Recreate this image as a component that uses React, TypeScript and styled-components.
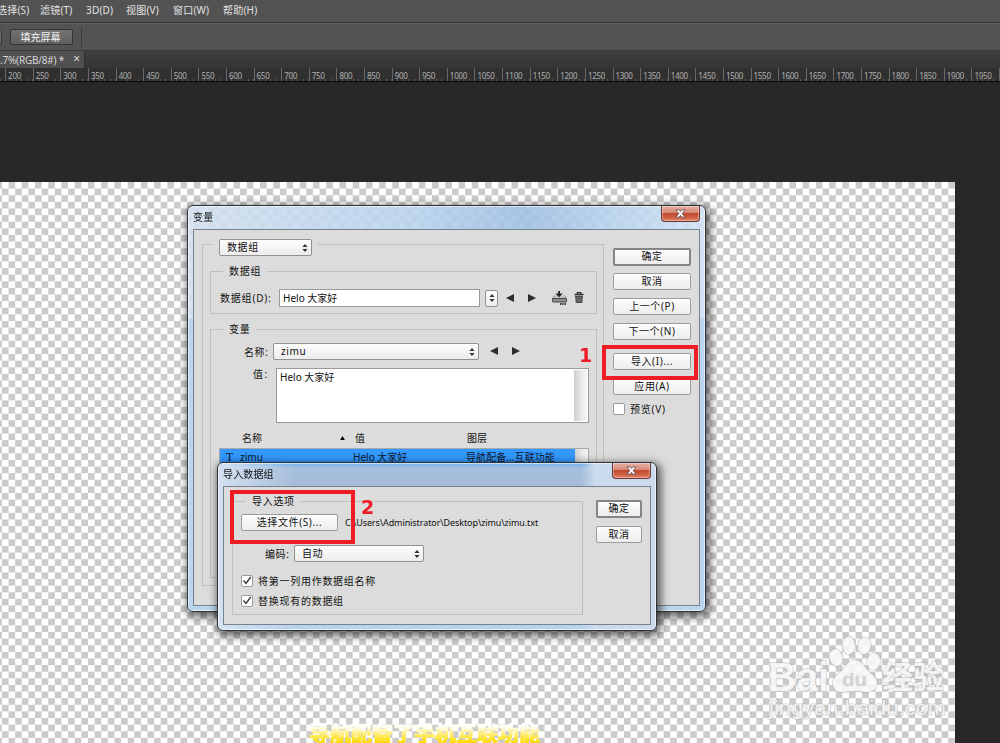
import * as React from 'react';
import { useState } from 'react';
import styled, { createGlobalStyle, css } from 'styled-components';

const GlobalStyle = createGlobalStyle`
  *, *::before, *::after {
    box-sizing: border-box;
  }
  html, body {
    margin: 0;
    padding: 0;
    overflow: hidden;
    background: #282828;
  }
  body {
    font-family: 'Noto Sans', 'Noto Sans CJK SC', sans-serif;
    font-size: 10px;
    line-height: 14px;
    color: #111;
  }
  button, input, textarea {
    font: inherit;
    color: inherit;
  }
`;

const Page = styled.div`
  position: relative;
  display: flex;
  flex-direction: column;
  width: 1000px;
  height: 743px;
  overflow: hidden;
`;

/* ---------- application chrome ---------- */

const MenuBar = styled.nav`
  display: flex;
  height: 23px;
  padding-top: 4px;
  background: #535353;
  border-bottom: 1px solid #383838;
  color: #e2e2e2;
`;

const MenuItem = styled.span<{ $width: number; $spacing?: number }>`
  flex: none;
  width: ${(p) => p.$width}px;
  line-height: 13px;
  white-space: nowrap;
  letter-spacing: ${(p) => p.$spacing ?? 0.2}px;
`;

const OptionsBar = styled.div`
  display: flex;
  align-items: center;
  height: 28px;
  background: #535353;
  border-top: 1px solid #626262;
  border-bottom: 1px solid #383838;
`;

const OptionButton = styled.button<{ $cut?: boolean }>`
  width: ${(p) => (p.$cut ? 12 : 63)}px;
  height: 16px;
  margin: 0 8px 0 ${(p) => (p.$cut ? -10 : 0)}px;
  padding: 0 2px 0 0;
  line-height: 12px;
  color: #f4f4f4;
  background: linear-gradient(#727272, #5f5f5f);
  border: 1px solid #343434;
  border-radius: 2px;
`;

const OptionDivider = styled.i`
  width: 1px;
  height: 20px;
  background: #3c3c3c;
`;

const TabBar = styled.div`
  display: flex;
  height: 17px;
  background: linear-gradient(#3f3f3f, #353535);
`;

const Tab = styled.div`
  display: flex;
  width: 85px;
  padding-top: 2px;
  line-height: 14px;
  letter-spacing: -0.2px;
  color: #d6d6d6;
  background: #505050;
  border-right: 1px solid #2d2d2d;
`;

const TabClose = styled.span`
  margin-left: 9px;
  font-size: 12px;
  line-height: 12px;
`;

const Ruler = styled.div`
  display: flex;
  height: 14px;
  overflow: hidden;
  background: #303030;
  border-bottom: 1px solid #090909;
`;

const RulerStep = styled.div`
  flex: none;
  width: 27.62px;
  height: 13px;
  padding-left: 2px;
  font-size: 8px;
  line-height: 15px;
  letter-spacing: -0.3px;
  color: #b0b0b0;
  border-left: 1px solid #686868;
  background: repeating-linear-gradient(90deg, transparent 0 4.5px, #5c5c5c 4.5px 5.5px) 0 100% / 100% 2px no-repeat;

  &:first-child {
    margin-left: -22.5px;
  }
`;

const Workspace = styled.main`
  position: relative;
  flex: 1;
  padding-top: 100px;
  background: #282828;
`;

const ArtBoard = styled.div`
  width: 955px;
  height: 561px;
  overflow: hidden;
`;

/* ---------- windows ---------- */

const Window = styled.section<{ $x: number; $y: number; $w: number; $h: number; $front?: boolean }>`
  position: absolute;
  left: ${(p) => p.$x}px;
  top: ${(p) => p.$y}px;
  display: flex;
  flex-direction: column;
  width: ${(p) => p.$w}px;
  height: ${(p) => p.$h}px;
  padding: 0 5px 5px;
  border: 1px solid #2f3338;
  border-radius: 6px;
  box-shadow: inset 0 0 0 1px rgba(255, 255, 255, 0.6), 2px 3px 9px 2px rgba(0, 0, 0, 0.6);
  backdrop-filter: blur(1.5px);
  background: ${(p) =>
    p.$front
      ? 'linear-gradient(90deg, #d3e1f2 0, rgba(180,200,222,0) 18%), linear-gradient(90deg, transparent 83%, #cbdaec 86%), linear-gradient(#69aef2 0, #a5bfdd 5px, #a6bbd5 24px, #c3d8ee 60px, #b9d3ec)'
      : 'linear-gradient(90deg, #d3e1f0d8 0, #c4d9efd8 20%, #b8d3efd8 42%, #9cbfe2d8 65%, #b8d3efd8 84%, #d0e2f4d8 100%) 0 0 / 100% 112px no-repeat, linear-gradient(transparent 112px, #bbd5ef 112px)'};
`;

const TitleBar = styled.header`
  display: flex;
  flex: none;
  justify-content: space-between;
  height: 23px;
  line-height: 23px;
  letter-spacing: 0.15px;
`;

const CloseButton = styled.button`
  display: flex;
  align-items: center;
  justify-content: center;
  width: 39px;
  height: 16px;
  padding: 0;
  background: linear-gradient(#e6b3a6 0, #d68773 45%, #c04a31 50%, #cf5d40 75%, #e1876a);
  border: 1px solid #6b3433;
  border-top: 0;
  border-radius: 0 0 4px 4px;
  box-shadow: inset 0 0 0 1px rgba(255, 255, 255, 0.35);
`;

const Client = styled.div<{ $top: number }>`
  display: flex;
  flex: 1;
  align-items: flex-start;
  padding: ${(p) => p.$top}px 0 0 8px;
  background: #dcdcdc;
  border: 1px solid #76828f;
  min-height: 0;
`;

const Group = styled.fieldset<{ $w: number; $h: number; $mt?: number; $pl?: number }>`
  flex: none;
  width: ${(p) => p.$w}px;
  height: ${(p) => p.$h}px;
  min-width: 0;
  margin: ${(p) => p.$mt ?? 0}px 0 0;
  padding: 0 0 0 ${(p) => p.$pl ?? 8}px;
  border: 1px solid #bfbfbf;
`;

const Legend = styled.legend<{ $ml: number; $h?: number }>`
  height: ${(p) => p.$h ?? 14}px;
  margin-left: ${(p) => p.$ml}px;
  padding: 0 6px;
  letter-spacing: 0.7px;
`;

const Row = styled.div<{ $mt: number; $h?: number }>`
  display: flex;
  align-items: center;
  height: ${(p) => p.$h ?? 17}px;
  margin-top: ${(p) => p.$mt}px;
`;

const Label = styled.label<{ $w: number; $ml?: number; $spacing?: number }>`
  flex: none;
  width: ${(p) => p.$w}px;
  margin-left: ${(p) => p.$ml ?? 0}px;
  line-height: 12px;
  letter-spacing: ${(p) => p.$spacing ?? 0.4}px;
  white-space: nowrap;
`;

const field = css`
  border: 1px solid #9a9a9a;
  background: #fff;
`;

const TextInput = styled.input`
  ${field}
  width: 201px;
  height: 18px;
  padding: 0 3px 1px;
  outline: 0;
`;

const SelectBox = styled.button<{ $w: number }>`
  display: flex;
  flex: none;
  align-items: center;
  justify-content: space-between;
  width: ${(p) => p.$w}px;
  height: 17px;
  padding: 0 3px 0 7px;
  line-height: 13px;
  letter-spacing: 0.6px;
  background: linear-gradient(#fdfdfd, #ececec);
  border: 1px solid #929292;
  border-radius: 2px;
`;

const Stepper = styled.button`
  display: flex;
  align-items: center;
  justify-content: center;
  width: 13px;
  height: 17px;
  margin-left: 5px;
  padding: 0;
  background: linear-gradient(#fdfdfd, #ececec);
  border: 1px solid #929292;
  border-radius: 2px;
`;

const IconButton = styled.button<{ $ml: number }>`
  display: flex;
  flex: none;
  margin-left: ${(p) => p.$ml}px;
  padding: 0 0 1px;
  background: none;
  border: 0;
`;

const ValueArea = styled.div`
  ${field}
  display: flex;
  flex: none;
  align-self: flex-start;
  justify-content: space-between;
  width: 313px;
  height: 55px;
  padding: 1px 1px 1px 3px;
`;

const ScrollTrack = styled.i`
  width: 13px;
  background: linear-gradient(90deg, #cfcfcf, #ececec 60%, #f4f4f4);
`;

const Table = styled.div`
  display: flex;
  width: 370px;
  height: 120px;
  padding: 0;
  border: 1px solid #a9a9a9;
  background: #fff;
`;

const TableRow = styled.div`
  display: flex;
  flex: 1;
  align-items: center;
  height: 16px;
  color: #0a1830;
  background: #3399ff;
`;

const Cell = styled.span<{ $w?: number; $spacing?: number }>`
  width: ${(p) => (p.$w ? `${p.$w}px` : 'auto')};
  letter-spacing: ${(p) => p.$spacing ?? 0}px;
  white-space: nowrap;
`;

const TypeMark = styled.span`
  width: 16px;
  padding-left: 6px;
  margin-right: 4px;
  font: 12px/14px 'Liberation Serif', serif;
`;

const ButtonColumn = styled.div<{ $ml: number; $w: number; $mt: number }>`
  display: flex;
  flex-direction: column;
  gap: 8px;
  width: ${(p) => p.$w}px;
  margin: ${(p) => p.$mt}px 0 0 ${(p) => p.$ml}px;
`;

const PushButton = styled.button<{ $default?: boolean; $w?: number; $mt?: number }>`
  flex: none;
  width: ${(p) => (p.$w ? `${p.$w}px` : '100%')};
  height: ${(p) => (p.$default ? 18 : 17)}px;
  margin-top: ${(p) => p.$mt ?? 0}px;
  padding: ${(p) => (p.$default ? '0 0 2px' : 0)};
  line-height: 13px;
  letter-spacing: 0.6px;
  white-space: nowrap;
  background: linear-gradient(#fdfdfd, #ededed);
  border: ${(p) => (p.$default ? '2px solid #858585' : '1px solid #9c9c9c')};
  border-radius: 2px;
`;

const CheckRow = styled.label<{ $mt?: number; $spacing?: number }>`
  display: flex;
  align-items: center;
  gap: 5px;
  height: 12px;
  margin-top: ${(p) => p.$mt ?? 0}px;
  line-height: 12px;
  letter-spacing: ${(p) => p.$spacing ?? 0.73}px;
  white-space: nowrap;
`;

const CheckBox = styled.span`
  ${field}
  display: flex;
  align-items: center;
  justify-content: center;
  width: 12px;
  height: 12px;
  border-radius: 2px;
`;

const FilePath = styled.span`
  margin-left: 7px;
  font-size: 9px;
  letter-spacing: -0.09px;
  white-space: nowrap;
`;

/* ---------- annotations ---------- */

const Highlight = styled.div<{ $x: number; $y: number; $w: number; $h: number }>`
  position: absolute;
  left: ${(p) => p.$x}px;
  top: ${(p) => p.$y}px;
  width: ${(p) => p.$w}px;
  height: ${(p) => p.$h}px;
  border: 4px solid #ee1c25;
`;

const StepNumber = styled.b<{ $x: number; $y: number }>`
  position: absolute;
  left: ${(p) => p.$x}px;
  top: ${(p) => p.$y}px;
  font: 700 19px/20px 'DejaVu Sans', sans-serif;
  color: #ee1c25;
`;

const Caption = styled.div`
  position: absolute;
  left: 309px;
  top: 720px;
  font: 900 21px/25px 'Noto Sans CJK SC', sans-serif;
  white-space: nowrap;
  color: transparent;
  -webkit-text-stroke: 0.6px transparent;
  background: linear-gradient(#ffffff 5px, #fffbe0 8px, #fff08a 13px, #ffe536 18px, #ffd800 23px);
  -webkit-background-clip: text;
  background-clip: text;
`;

const WatermarkSvg = styled.svg`
  position: absolute;
  left: 760px;
  top: 628px;
`;

/* ---------- small drawings ---------- */

const UpDown = (): React.ReactElement => (
  <svg width="6" height="8" viewBox="0 0 6 8" fill="#333">
    <path d="M3 0 5.6 3H.4zM3 8 .4 5h5.2z" />
  </svg>
);

const Arrow = ({ left }: { left?: boolean }): React.ReactElement => (
  <svg width="8" height="8" viewBox="0 0 8 8" fill="#2d2d2d">
    <path d={left ? 'M8 0v8L0 4z' : 'M0 0v8l8-4z'} />
  </svg>
);

const CloseMark = (): React.ReactElement => (
  <svg width="11" height="9" viewBox="0 0 11 9">
    <path d="M1 .8h3L5.5 2.6 7 .8h3L7.2 4.5 10 8.2H7L5.5 6.4 4 8.2H1l2.8-3.7z" fill="#fff" stroke="#5b4a58" strokeWidth=".8" />
  </svg>
);

const ImportIcon = (): React.ReactElement => (
  <svg width="15" height="14" viewBox="0 0 15 14">
    <path d="M2.500 4.500 .7 7.500h13.600l-1.800-3" fill="#c4c4c4" stroke="#777" strokeWidth=".8" />
    <path d="M6.200 0h1.800v2.500h2.800L7.100 6.200 3.400 2.500h2.800z" fill="#222" />
    <rect x=".5" y="7.500" width="14" height="3.500" rx=".6" fill="#8f8f8f" stroke="#444" />
    <path d="M8 12h1.400v2H8zM10.300 12h1.400v2h-1.400zM12.600 12H14v2h-1.400z" fill="#333" />
  </svg>
);

const TrashIcon = (): React.ReactElement => (
  <svg width="10" height="11" viewBox="0 0 10 11">
    <path d="M3.300 1.800V.6h3.400v1.200M.5 2.500h9" fill="none" stroke="#333" strokeWidth="1.300" />
    <path d="M1 3.800h8L8.200 11H1.800z" fill="#4a4a4a" />
    <path d="M3.300 5v5M5 5v5M6.700 5v5" stroke="#999" strokeWidth=".6" />
  </svg>
);

const Tick = (): React.ReactElement => (
  <svg width="10" height="10" viewBox="0 0 10 10">
    <path d="M1.500 4.500 4 7.500 8.700 1" fill="none" stroke="#333" strokeWidth="1.300" />
  </svg>
);

const Checkerboard = (): React.ReactElement => (
  <svg width="955" height="561">
    <defs>
      <pattern id="squares" x="710" y="0" width="13.235" height="13.235" patternUnits="userSpaceOnUse">
        <rect width="13.235" height="13.235" fill="#fff" />
        <rect width="6.617" height="6.617" fill="#cbcbcb" />
        <rect x="6.617" y="6.617" width="6.618" height="6.618" fill="#cbcbcb" />
      </pattern>
    </defs>
    <rect width="955" height="561" fill="url(#squares)" />
  </svg>
);

const Watermark = (): React.ReactElement => (
  <WatermarkSvg width="200" height="100" fill="#f8f8f8" fillOpacity=".88" stroke="#a0a0a0" strokeOpacity=".38" strokeWidth="2" paintOrder="stroke">
    <text x="8" y="63" fontFamily="Liberation Sans" fontWeight="700" fontSize="41" textLength="61" lengthAdjust="spacingAndGlyphs">
      Bai
    </text>
    <ellipse cx="76" cy="29.500" rx="6.500" ry="8.500" transform="rotate(-12 76 29.500)" />
    <ellipse cx="88.700" cy="17.500" rx="6.300" ry="9" />
    <ellipse cx="104.300" cy="17.800" rx="6.500" ry="8.500" transform="rotate(12 104.300 17.800)" />
    <ellipse cx="113.700" cy="33.500" rx="6.500" ry="8.500" transform="rotate(10 113.700 33.500)" />
    <path d="M94.500 32c7 0 9 5.500 13 10 4 4 10 8 9.500 14-.5 6-5 8-10 8-4 0-8-1.200-12.500-1.200S86 64 82 64c-5 0-9.200-2.500-9.200-8.500 0-6 5.700-9.500 9.700-13.500s5.500-10 12-10z" />
    <text x="82" y="58" fontFamily="Liberation Sans" fontWeight="700" fontSize="18" fill="#d4d4d4" fillOpacity="1" strokeWidth=".5" textLength="25" lengthAdjust="spacingAndGlyphs">
      du
    </text>
    <text x="122" y="60" fontFamily="Noto Sans CJK SC" fontWeight="700" fontSize="31">
      经验
    </text>
    <text x="9" y="87" fontFamily="Liberation Sans" fontSize="20" strokeWidth="1.600" textLength="177" lengthAdjust="spacingAndGlyphs">
      jingyan.baidu.com
    </text>
  </WatermarkSvg>
);

const RULER_START = 150;
const rulerMarks = Array.from({ length: 38 }, (_, i) => RULER_START + i * 50);

const menus = [
  { label: '选择(S)', width: 43 },
  { label: '滤镜(T)', width: 46 },
  { label: '3D(D)', width: 40 },
  { label: '视图(V)', width: 47 },
  { label: '窗口(W)', width: 50 },
  { label: '帮助(H)', width: 50 },
];

const VariablesDialog = (): React.ReactElement => {
  const [dataSet, setDataSet] = useState('Helo 大家好');

  return (
    <Window $x={187} $y={205} $w={519} $h={407}>
      <TitleBar>
        <span>变量</span>
        <CloseButton>
          <CloseMark />
        </CloseButton>
      </TitleBar>
      <Client $top={9}>
        <Group $w={402} $h={347} $pl={7}>
          <Legend $ml={3} $h={11}>
            <SelectBox $w={93}>
              数据组 <UpDown />
            </SelectBox>
          </Legend>
          <Group $w={387} $h={50} $mt={14}>
            <Legend $ml={4}>数据组</Legend>
            <Row $mt={11} $h={18}>
              <Label $w={59} $ml={1} $spacing={0.8}>
                数据组(D):
              </Label>
              <TextInput value={dataSet} onChange={(e): void => setDataSet(e.target.value)} />
              <Stepper>
                <UpDown />
              </Stepper>
              <IconButton $ml={8}>
                <Arrow left />
              </IconButton>
              <IconButton $ml={14}>
                <Arrow />
              </IconButton>
              <IconButton $ml={16}>
                <ImportIcon />
              </IconButton>
              <IconButton $ml={7}>
                <TrashIcon />
              </IconButton>
            </Row>
          </Group>
          <Group $w={387} $h={256} $mt={8}>
            <Legend $ml={4}>变量</Legend>
            <Row $mt={7}>
              <Label $w={29} $ml={25} $spacing={0.6}>
                名称:
              </Label>
              <SelectBox $w={206}>
                zimu <UpDown />
              </SelectBox>
              <IconButton $ml={11}>
                <Arrow left />
              </IconButton>
              <IconButton $ml={14}>
                <Arrow />
              </IconButton>
            </Row>
            <Row $mt={8} $h={55}>
              <Label $w={23} $ml={34} $spacing={1.5} style={{ alignSelf: 'flex-start' }}>
                值:
              </Label>
              <ValueArea>
                Helo 大家好
                <ScrollTrack />
              </ValueArea>
            </Row>
            <Row $mt={8} $h={14}>
              <Label $w={98} $ml={23} $spacing={0}>
                名称
              </Label>
              <svg width="5" height="4" viewBox="0 0 6 5">
                <path d="M3 0 6 5H0z" />
              </svg>
              <Label $w={112} $ml={10}>
                值
              </Label>
              <Cell>图层</Cell>
            </Row>
            <Row $mt={3} $h={120}>
              <Table>
                <TableRow>
                  <TypeMark>T</TypeMark>
                  <Cell $w={113}>zimu</Cell>
                  <Cell $w={113}>Helo 大家好</Cell>
                  <Cell $spacing={0.08}>导航配备...互联功能</Cell>
                </TableRow>
                <ScrollTrack />
              </Table>
            </Row>
          </Group>
        </Group>
        <ButtonColumn $ml={9} $w={78} $mt={9}>
          <PushButton $default>确定</PushButton>
          <PushButton $mt={-1}>取消</PushButton>
          <PushButton>上一个(P)</PushButton>
          <PushButton>下一个(N)</PushButton>
          <PushButton $mt={5}>导入(I)...</PushButton>
          <PushButton>应用(A)</PushButton>
          <CheckRow>
            <CheckBox />
            预览(V)
          </CheckRow>
        </ButtonColumn>
      </Client>
    </Window>
  );
};

const ImportDialog = (): React.ReactElement => (
  <Window $x={217} $y={462} $w={440} $h={169} $front>
    <TitleBar>
      <span>导入数据组</span>
      <CloseButton>
        <CloseMark />
      </CloseButton>
    </TitleBar>
    <Client $top={7}>
      <Group $w={351} $h={121}>
        <Legend $ml={5}>导入选项</Legend>
        <Row $mt={6}>
          <PushButton $w={97}>选择文件(S)...</PushButton>
          <FilePath>C:\Users\Administrator\Desktop\zimu\zimu.txt</FilePath>
        </Row>
        <Row $mt={14}>
          <Label $w={29} $ml={24} $spacing={0.6}>
            编码:
          </Label>
          <SelectBox $w={130}>
            自动 <UpDown />
          </SelectBox>
        </Row>
        <CheckRow $mt={13}>
          <CheckBox>
            <Tick />
          </CheckBox>
          将第一列用作数据组名称
        </CheckRow>
        <CheckRow $mt={8}>
          <CheckBox>
            <Tick />
          </CheckBox>
          替换现有的数据组
        </CheckRow>
      </Group>
      <ButtonColumn $ml={13} $w={46} $mt={6}>
        <PushButton $default>确定</PushButton>
        <PushButton>取消</PushButton>
      </ButtonColumn>
    </Client>
  </Window>
);

const App = (): React.ReactElement => (
  <Page>
    <GlobalStyle />
    <MenuBar>
      {menus.map((m, i) => (
        <MenuItem key={m.label} $width={m.width} style={i === 0 ? { marginLeft: -3 } : undefined}>
          {m.label}
        </MenuItem>
      ))}
    </MenuBar>
    <OptionsBar>
      <OptionButton $cut />
      <OptionButton>填充屏幕</OptionButton>
      <OptionDivider />
    </OptionsBar>
    <TabBar>
      <Tab>
        .7%(RGB/8#) * <TabClose>×</TabClose>
      </Tab>
    </TabBar>
    <Ruler>
      {rulerMarks.map((mark) => (
        <RulerStep key={mark}>{mark}</RulerStep>
      ))}
    </Ruler>
    <Workspace>
      <ArtBoard>
        <Checkerboard />
      </ArtBoard>
    </Workspace>
    <Caption>导航配备了手机互联功能</Caption>
    <Watermark />
    <VariablesDialog />
    <ImportDialog />
    <Highlight $x={602} $y={345} $w={96} $h={35} />
    <Highlight $x={230} $y={490} $w={125} $h={54} />
    <StepNumber $x={579} $y={345}>
      1
    </StepNumber>
    <StepNumber $x={361} $y={497}>
      2
    </StepNumber>
  </Page>
);

export default App;
